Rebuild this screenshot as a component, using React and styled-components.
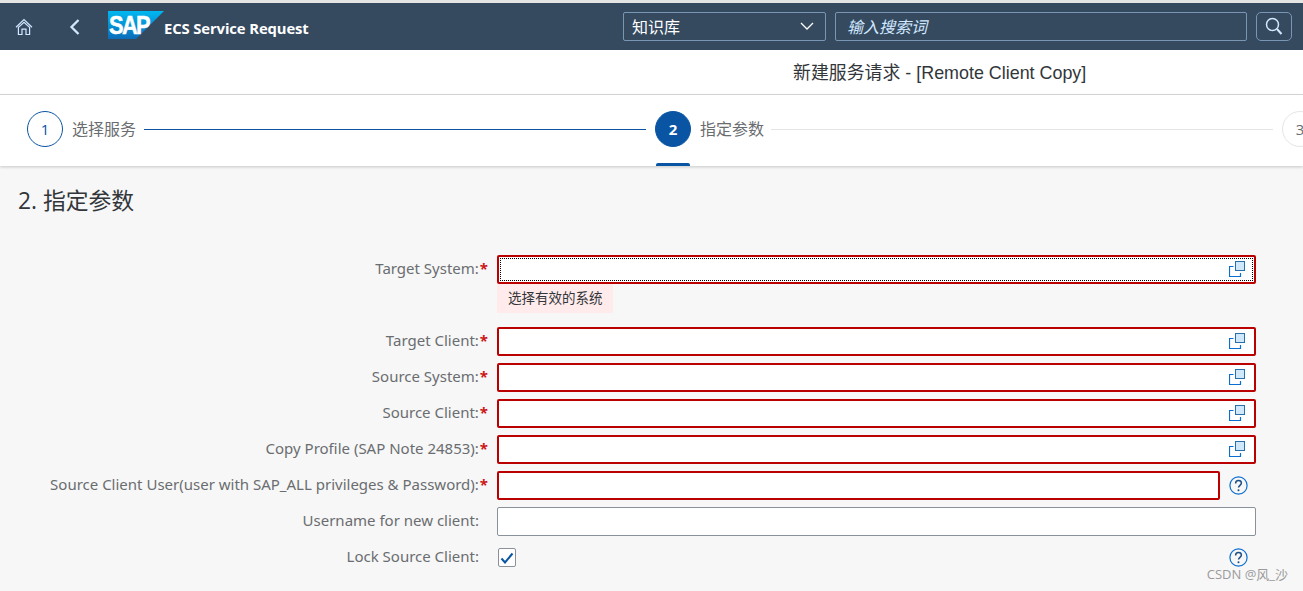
import React from "react";
import styled, { createGlobalStyle } from "styled-components";

const Global = createGlobalStyle`
  html, body { margin: 0; padding: 0; height: 100%; background: #f7f7f7; overflow: hidden; }
  body { font-family: "Open Sans", "Noto Sans CJK SC", sans-serif; }
  * { box-sizing: border-box; }
`;

const Page = styled.div`
  width: 1303px;
  height: 591px;
  overflow: hidden;
  position: relative;
  border-top: 3px solid #e4e4e4;
  background: #f7f7f7;
`;

const Shell = styled.header`
  height: 47px;
  background: #354a5f;
  display: flex;
  align-items: center;
  padding-left: 15px;
`;

const NavIcon = styled.button`
  flex: none;
  width: ${(p) => p.$w}px;
  height: 24px;
  margin-right: ${(p) => p.$mr}px;
  padding: 0;
  border: 0;
  background: none;
  display: flex;
  align-items: center;
  color: #d1e8ff;
`;

const Brand = styled.div`
  display: flex;
  align-items: center;
  width: 515px;
  flex: none;
  margin-top: -3px;
`;

const AppTitle = styled.span`
  color: #fff;
  font-weight: 700;
  font-size: 14.8px;
  letter-spacing: -0.1px;
  white-space: nowrap;
  padding-top: 6px;
`;

const ScopeSelect = styled.div`
  flex: none;
  width: 203px;
  height: 29px;
  margin-top: -1px;
  border: 1px solid #7996b4;
  border-radius: 2px;
  display: flex;
  align-items: center;
  justify-content: space-between;
  padding: 0 11px 0 8px;
  color: #fff;
  font-size: 16px;
  margin-right: 9px;
`;

const SearchInput = styled.div`
  flex: none;
  width: 412px;
  height: 29px;
  margin-top: -1px;
  border: 1px solid #7996b4;
  border-radius: 2px;
  display: flex;
  align-items: center;
  padding-left: 11px;
  color: #d1e8ff;
  font-size: 16px;
  font-style: italic;
  margin-right: 9px;
`;

const SearchButton = styled.button`
  flex: none;
  width: 36px;
  height: 29px;
  margin-top: -1px;
  padding: 0;
  border: 1px solid #7996b4;
  border-radius: 5px;
  background: none;
  display: flex;
  align-items: center;
  justify-content: center;
  color: #d1e8ff;
`;

const TitleBar = styled.div`
  height: 45px;
  background: #fff;
  border-bottom: 1px solid #d9d9d9;
  display: flex;
  align-items: center;
  padding-left: 793px;
  padding-bottom: 2px;
  font-size: 17.9px;
  color: #32363a;
  font-family: "Liberation Sans", "Noto Sans CJK SC", sans-serif;
  white-space: nowrap;
`;

const Stepper = styled.nav`
  height: 71px;
  background: #fff;
  box-shadow: 0 1px 3px rgba(0, 0, 0, 0.2);
  display: flex;
  align-items: center;
  padding: 0 0 3px 27px;
  position: relative;
  white-space: nowrap;
`;

const Circle = styled.span`
  flex: none;
  width: 36px;
  height: 36px;
  border-radius: 50%;
  display: flex;
  align-items: center;
  justify-content: center;
  font-size: 15px;
  font-weight: ${(p) => (p.$current ? 700 : 400)};
  border: 1px solid ${(p) => (p.$current || p.$done ? "#0a55a3" : "#e5e5e5")};
  background: ${(p) => (p.$current ? "#0a55a3" : "#fff")};
  color: ${(p) => (p.$current ? "#fff" : p.$done ? "#0a55a3" : "#6a6d70")};
`;

const StepLabel = styled.span`
  flex: none;
  width: ${(p) => p.$w}px;
  margin: -3px 9px 0 9px;
  font-size: 16px;
  color: #6a6d70;
`;

const StepLine = styled.span`
  flex: none;
  width: 502px;
  height: 1px;
  margin-right: 9px;
  background: ${(p) => (p.$done ? "#0a55a3" : "#e5e5e5")};
`;

const ActiveMark = styled.span`
  position: absolute;
  left: 656px;
  bottom: 0;
  width: 34px;
  height: 3px;
  background: #0a55a3;
  border-radius: 2px 2px 0 0;
`;

const Heading = styled.h2`
  margin: 0;
  padding: 19px 0 0 18px;
  height: 89px;
  font-size: 22.8px;
  line-height: 32px;
  font-weight: 400;
  color: #32363a;
`;

const Form = styled.div`
  display: grid;
  grid-template-columns: 488px 759px;
  column-gap: 9px;
  row-gap: 7px;
  align-items: center;
`;

const Label = styled.label`
  text-align: right;
  font-family: "Noto Sans", "Noto Sans CJK SC", sans-serif;
  font-size: 15px;
  color: #6a6d70;
  white-space: nowrap;
  padding-right: ${(p) => (p.$required ? 0 : 9)}px;
  margin-top: -4px;
`;

const Star = styled.span`
  color: #cc1919;
  font-weight: 700;
  margin-left: 1px;
`;

const FieldRow = styled.div`
  display: flex;
  align-items: center;
  gap: 9px;
  min-height: 29px;
  position: relative;
`;

const Input = styled.div`
  flex: 1;
  height: 29px;
  background: #fff;
  border: ${(p) => (p.$error ? "2px solid #bb0000" : "1px solid #89919a")};
  border-radius: 2px;
  display: flex;
  align-items: center;
  justify-content: flex-end;
  padding-right: 9px;
  position: relative;
  ${(p) => p.$focus && `outline: 1px dotted #000; outline-offset: -4px;`}
`;

const HelpSlot = styled.span`
  flex: none;
  width: 27px;
  height: 20px;
  display: flex;
  align-items: center;
  color: #0a6ed1;
`;

const Message = styled.div`
  height: 29px;
  width: 116px;
  margin: -7px 0 7px;
  padding-left: 11px;
  background: #ffebeb;
  font-size: 13.5px;
  line-height: 28px;
  color: #32363a;
`;

const Box = styled.span`
  width: 18px;
  height: 19px;
  margin-left: 1px;
  background: #fff;
  border: 1px solid #89919a;
  border-radius: 2px;
  display: flex;
  align-items: center;
  justify-content: center;
`;

const CheckRow = styled(FieldRow)`
  justify-content: space-between;
  padding-right: 8px;
`;

const Watermark = styled.span`
  position: absolute;
  right: 15px;
  bottom: 8px;
  font-size: 13px;
  color: #9a9a9a;
`;

const Home = () => (
  <svg width="18" height="18" viewBox="0 0 18 18" fill="none" stroke="currentColor" strokeWidth="1.2">
    <path d="M1 9.2 9 1.5l8 7.7" />
    <path d="M3.4 9.4 9 4.2l5.6 5.2" />
    <path d="M3.4 8.8V16.5H7V11.2H11V16.5H14.6V8.8" />
  </svg>
);

const Back = () => (
  <svg width="11" height="18" viewBox="0 0 11 18" fill="none" stroke="currentColor" strokeWidth="2.3">
    <path d="M9.5 2 2.5 9l7 7" />
  </svg>
);

const Logo = () => (
  <svg width="56" height="28" viewBox="0 0 56 28" style={{ flex: "none" }}>
    <defs>
      <linearGradient id="sapg" x1="0" y1="0" x2="0" y2="1">
        <stop offset="0" stopColor="#00b8f1" />
        <stop offset="1" stopColor="#0a6cb8" />
      </linearGradient>
    </defs>
    <polygon points="0,0 56,0 28,28 0,28" fill="url(#sapg)" />
    <text transform="translate(1 23) scale(.84 1)" fill="#fff" stroke="#fff" strokeWidth="0.5" fontFamily="Liberation Sans" fontWeight="700" fontSize="26" letterSpacing="-2">SAP</text>
  </svg>
);

const Chevron = () => (
  <svg width="14" height="9" viewBox="0 0 14 9" fill="none" stroke="#fff" strokeWidth="1.3">
    <path d="M1 1l6 6 6-6" />
  </svg>
);

const Search = () => (
  <svg width="18" height="18" viewBox="0 0 18 18" fill="none" stroke="currentColor" strokeWidth="1.5">
    <circle cx="7.5" cy="7.5" r="6" />
    <path d="M12 12l4.5 5" strokeWidth="2" />
  </svg>
);

const ValueHelp = () => (
  <svg width="16" height="17" viewBox="0 0 16 17" fill="none" style={{ marginTop: -1 }}>
    <rect x="6.5" y="0.5" width="9" height="9" fill="#cfe8fb" stroke="#2a6fa8" />
    <path d="M4.5 5.5H0.5V15.5H11.5V12" stroke="#0a6ed1" strokeWidth="1.2" />
  </svg>
);

const Help = () => (
  <svg width="19" height="19" viewBox="0 0 19 19" fill="none">
    <circle cx="9.5" cy="9.5" r="8.6" stroke="#0a6ed1" strokeWidth="1.2" />
    <path d="M6.6 7.4c0-1.8 1.3-2.9 2.9-2.9s2.9 1 2.9 2.6c0 2.2-2.9 2.2-2.9 4.5" stroke="#1d4f86" strokeWidth="1.5" />
    <circle cx="9.5" cy="14.3" r="1" fill="#1d4f86" />
  </svg>
);

const Check = () => (
  <svg width="14" height="12" viewBox="0 0 14 12" fill="none">
    <path d="M1.5 6.5 5 10.5 12.5 1.5" stroke="#0a55a3" strokeWidth="2" />
  </svg>
);

const fields = [
  { label: "Target System:", focus: true, message: "选择有效的系统" },
  { label: "Target Client:" },
  { label: "Source System:" },
  { label: "Source Client:" },
  { label: "Copy Profile (SAP Note 24853):" },
];

export default function App() {
  return (
    <Page>
      <Global />
      <Shell>
        <NavIcon $w={18} $mr={36}><Home /></NavIcon>
        <NavIcon $w={11} $mr={28}><Back /></NavIcon>
        <Brand>
          <Logo />
          <AppTitle>ECS Service Request</AppTitle>
        </Brand>
        <ScopeSelect>知识库<Chevron /></ScopeSelect>
        <SearchInput>输入搜索词</SearchInput>
        <SearchButton><Search /></SearchButton>
      </Shell>
      <TitleBar>新建服务请求 - [Remote Client Copy]</TitleBar>
      <Stepper>
        <Circle $done>1</Circle>
        <StepLabel $w={63}>选择服务</StepLabel>
        <StepLine $done />
        <Circle $current>2</Circle>
        <StepLabel $w={62}>指定参数</StepLabel>
        <StepLine />
        <Circle>3</Circle>
        <ActiveMark />
      </Stepper>
      <Heading>2. 指定参数</Heading>
      <Form>
        {fields.map((f) => (
          <React.Fragment key={f.label}>
            <Label $required>{f.label}<Star>*</Star></Label>
            <FieldRow>
              <Input $error $focus={f.focus}><ValueHelp /></Input>
            </FieldRow>
            {f.message && (
              <>
                <span />
                <Message>{f.message}</Message>
              </>
            )}
          </React.Fragment>
        ))}
        <Label $required>Source Client User(user with SAP_ALL privileges &amp; Password):<Star>*</Star></Label>
        <FieldRow>
          <Input $error />
          <HelpSlot><Help /></HelpSlot>
        </FieldRow>
        <Label>Username for new client:</Label>
        <FieldRow>
          <Input />
        </FieldRow>
        <Label>Lock Source Client:</Label>
        <CheckRow>
          <Box><Check /></Box>
          <Help />
        </CheckRow>
      </Form>
      <Watermark>CSDN @风_沙</Watermark>
    </Page>
  );
}
